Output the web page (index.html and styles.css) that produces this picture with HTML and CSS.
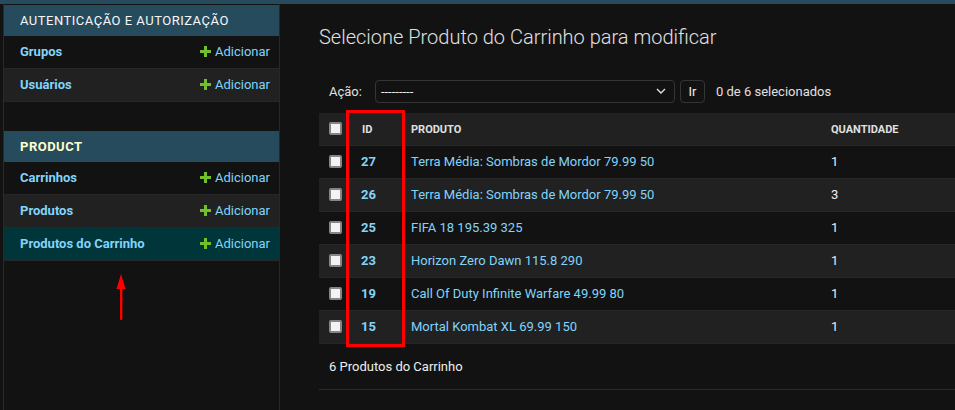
FILE: index.html
```html
<!DOCTYPE html>
<html lang="pt-br">
<head>
<meta charset="utf-8">
<title>Selecione Produto do Carrinho para modificar</title>
<link rel="stylesheet" href="styles.css">
</head>
<body>
<div class="topbar"></div>
<div class="layout">
  <nav class="sidebar">
    <table class="app">
      <caption>Autenticação e Autorização</caption>
      <tr><th><a href="#">Grupos</a></th><td class="add"><a href="#"><svg class="plus" width="11" height="11" viewBox="0 0 11 11"><rect x="4" y="0" width="3" height="11" fill="#70bf2b"/><rect x="0" y="4" width="11" height="3" fill="#70bf2b"/></svg>Adicionar</a></td></tr>
      <tr><th><a href="#">Usuários</a></th><td class="add"><a href="#"><svg class="plus" width="11" height="11" viewBox="0 0 11 11"><rect x="4" y="0" width="3" height="11" fill="#70bf2b"/><rect x="0" y="4" width="11" height="3" fill="#70bf2b"/></svg>Adicionar</a></td></tr>
    </table>
    <table class="app current">
      <caption>Product</caption>
      <tr><th><a href="#">Carrinhos</a></th><td class="add"><a href="#"><svg class="plus" width="11" height="11" viewBox="0 0 11 11"><rect x="4" y="0" width="3" height="11" fill="#70bf2b"/><rect x="0" y="4" width="11" height="3" fill="#70bf2b"/></svg>Adicionar</a></td></tr>
      <tr><th><a href="#">Produtos</a></th><td class="add"><a href="#"><svg class="plus" width="11" height="11" viewBox="0 0 11 11"><rect x="4" y="0" width="3" height="11" fill="#70bf2b"/><rect x="0" y="4" width="11" height="3" fill="#70bf2b"/></svg>Adicionar</a></td></tr>
      <tr class="selected"><th><a href="#">Produtos do Carrinho</a></th><td class="add"><a href="#"><svg class="plus" width="11" height="11" viewBox="0 0 11 11"><rect x="4" y="0" width="3" height="11" fill="#70bf2b"/><rect x="0" y="4" width="11" height="3" fill="#70bf2b"/></svg>Adicionar</a></td></tr>
    </table>
    <svg class="arrow" width="10" height="46" viewBox="0 0 10 46"><polygon points="5,0 0.5,15 9.5,15" fill="#ff0000"/><rect x="4" y="14" width="2.4" height="32" rx="1" fill="#ff0000"/></svg>
  </nav>
  <main class="content">
    <h1>Selecione Produto do Carrinho para modificar</h1>
    <div class="actions">
      <label class="action-label">Ação:</label>
      <div class="select"><span>---------</span><svg class="chev" width="10" height="6" viewBox="0 0 10 6"><path d="M1 1 L5 5 L9 1" fill="none" stroke="#e0e0e0" stroke-width="1.4"/></svg></div>
      <button class="go">Ir</button>
      <span class="counter">0 de 6 selecionados</span>
    </div>
    <div class="results">
      <table class="list">
        <thead>
          <tr><th class="cb"><span class="box"></span></th><th class="idc">Id</th><th class="prod">Produto</th><th>Quantidade</th></tr>
        </thead>
        <tbody>
          <tr><td class="cb"><span class="box"></span></td><th class="idc"><a href="#">27</a></th><td class="prod"><a href="#">Terra Média: Sombras de Mordor 79.99 50</a></td><td>1</td></tr>
          <tr><td class="cb"><span class="box"></span></td><th class="idc"><a href="#">26</a></th><td class="prod"><a href="#">Terra Média: Sombras de Mordor 79.99 50</a></td><td>3</td></tr>
          <tr><td class="cb"><span class="box"></span></td><th class="idc"><a href="#">25</a></th><td class="prod"><a href="#">FIFA 18 195.39 325</a></td><td>1</td></tr>
          <tr><td class="cb"><span class="box"></span></td><th class="idc"><a href="#">23</a></th><td class="prod"><a href="#">Horizon Zero Dawn 115.8 290</a></td><td>1</td></tr>
          <tr><td class="cb"><span class="box"></span></td><th class="idc"><a href="#">19</a></th><td class="prod"><a href="#">Call Of Duty Infinite Warfare 49.99 80</a></td><td>1</td></tr>
          <tr><td class="cb"><span class="box"></span></td><th class="idc"><a href="#">15</a></th><td class="prod"><a href="#">Mortal Kombat XL 69.99 150</a></td><td>1</td></tr>
        </tbody>
      </table>
      <div class="highlight"></div>
    </div>
    <p class="paginator">6 Produtos do Carrinho</p>
  </main>
</div>
</body>
</html>
```

FILE: styles.css
```css
html, body {
  margin: 0;
  padding: 0;
  background: #121212;
  height: 100%;
  overflow: hidden;
}
body {
  font-family: Roboto, "Liberation Sans", Arial, sans-serif;
  font-size: 13px;
  color: #eeeeee;
}
a {
  color: #81d4fa;
  text-decoration: none;
}
.topbar {
  height: 4px;
  background: #264b5d;
}
.layout {
  display: flex;
  height: 406px;
}
.sidebar {
  position: relative;
  flex: 0 0 275px;
  margin-left: 3px;
  border-left: 1px solid #2a2a2a;
  border-right: 1px solid #272727;
  padding-top: 1px;
}
.app {
  width: 100%;
  border-collapse: collapse;
  margin-bottom: 29px;
}
.app caption {
  background: #264b5d;
  color: #f7f7f7;
  text-align: left;
  text-transform: uppercase;
  letter-spacing: 0.5px;
  padding: 8px 16px;
  line-height: 15px;
  font-size: 13px;
  font-weight: 400;
}
.app.current caption {
  color: #ffffcc;
  font-weight: 700;
}
.app th, .app td {
  padding: 8px 8px 8px 16px;
  line-height: 16px;
  border-bottom: 1px solid #272727;
  text-align: left;
}
.app th a {
  font-weight: 700;
}
.app tr:nth-child(even) {
  background: #212121;
}
.app tr.selected {
  background: #00363a;
}
.app td.add {
  text-align: right;
  padding-right: 9px;
  white-space: nowrap;
}
.plus {
  vertical-align: -1px;
  margin-right: 4px;
}
.arrow {
  position: absolute;
  left: 112px;
  top: 270px;
}
.content {
  flex: 1;
  padding: 21px 0 0 39px;
  min-width: 0;
}
h1 {
  margin: 0 0 20px;
  font-size: 20px;
  font-weight: 300;
  line-height: 24px;
  color: #e0e0e0;
}
.actions {
  display: flex;
  align-items: center;
  padding: 10px;
  height: 24px;
  color: #e0e0e0;
}
.action-label {
  margin-right: 13px;
}
.select {
  border: 1px solid #353535;
  border-radius: 4px;
  display: flex;
  align-items: center;
  justify-content: space-between;
  padding: 0 8px 0 5px;
  box-sizing: border-box;
  width: 300px;
  height: 23px;
  color: #eeeeee;
}
.go {
  margin-left: 5px;
  width: 25px;
  height: 23px;
  border: 1px solid #353535;
  border-radius: 4px;
  background: #121212;
  color: #eeeeee;
  font: inherit;
  padding: 0;
}
.counter {
  margin-left: 11px;
}
.results {
  position: relative;
}
.list {
  width: 100%;
  border-collapse: collapse;
  table-layout: fixed;
}
.list th, .list td {
  padding: 8px;
  line-height: 16px;
  border-bottom: 1px solid #272727;
  text-align: left;
  white-space: nowrap;
}
.list thead th {
  background: #212121;
  font-size: 11px;
  font-weight: 700;
  text-transform: uppercase;
  color: #e0e0e0;
  border-bottom: 1px solid #272727;
  padding-top: 9px;
  padding-bottom: 7px;
}
.list thead th.idc {
  padding-left: 9px;
}
.list tbody tr:nth-child(even) {
  background: #212121;
}
.list .cb {
  width: 19px;
  padding-left: 10px;
  padding-right: 5px;
}
.list .idc {
  width: 33px;
}
.list .prod {
  width: 404px;
}
.list tbody th a {
  font-weight: 700;
}
.box {
  display: inline-block;
  width: 9px;
  height: 9px;
  border: 2px solid #858585;
  border-radius: 2px;
  background: #f3f3f3;
  vertical-align: -2px;
}
.highlight {
  position: absolute;
  left: 27px;
  top: -3px;
  width: 53px;
  height: 231px;
  border: 3px solid #ff0000;
}
.paginator {
  margin: 0;
  padding: 12px 10px 11px;
  line-height: 22px;
  border-bottom: 1px solid #2a2a2a;
  color: #eeeeee;
}
```
